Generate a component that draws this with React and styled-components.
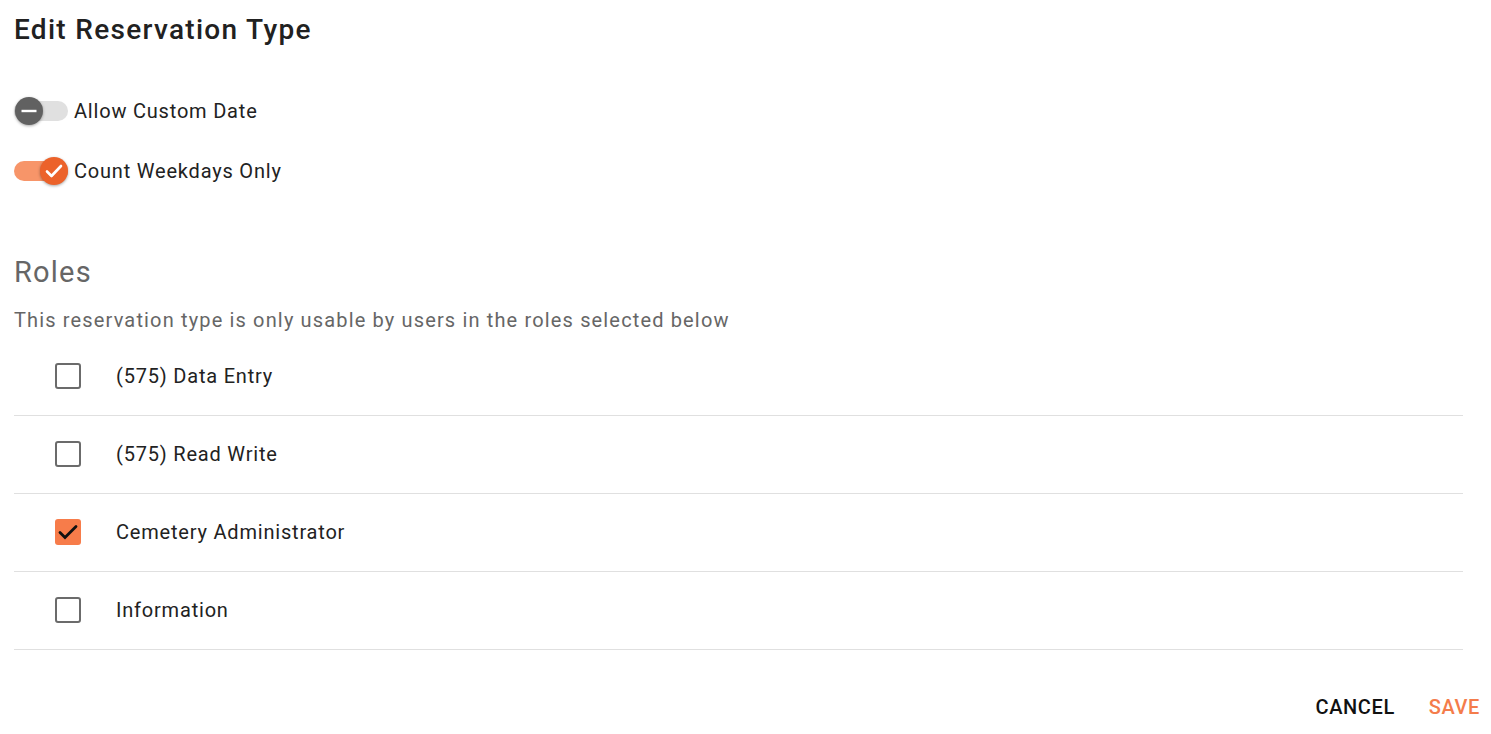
import React from 'react'
import styled, { createGlobalStyle } from 'styled-components'

const Global = createGlobalStyle`
body {
  margin: 0;
  background: #fff;
  font-family: Roboto, "Noto Sans", sans-serif;
  color: #222;
}
`

const Page = styled.div`
display: flex;
flex-direction: column;
padding: 12px 11px 0 14px;
`

const Title = styled.h1`
margin: 0;
font-size: 28px;
font-weight: 500;
line-height: 36px;
color: #212121;
letter-spacing: 1.3px;
`

const ToggleList = styled.div`
display: flex;
flex-direction: column;
gap: 22px;
margin-top: 44px;
`

const ToggleRow = styled.label`
display: flex;
align-items: center;
height: 38px;
font-size: 20px;
letter-spacing: 0.8px;
color: #222;
`

const Track = styled.span`
position: relative;
display: inline-block;
width: 54px;
height: 20px;
border-radius: 10px;
margin-right: 6px;
background: ${p => (p.$on ? '#f79569' : '#e0e0e0')};
`

const Thumb = styled.span`
position: absolute;
top: -4px;
left: ${p => (p.$on ? '26px' : '1px')};
width: 28px;
height: 28px;
border-radius: 50%;
background: ${p => (p.$on ? '#ec622a' : '#616161')};
box-shadow: 0 1px 3px rgba(0,0,0,0.35);
display: flex;
align-items: center;
justify-content: center;
`

const RolesHeader = styled.h2`
margin: 64px 0 0;
font-size: 29px;
font-weight: 400;
line-height: 36px;
color: #666;
letter-spacing: 1.2px;
`

const Subtitle = styled.p`
margin: 16px 0 0;
font-size: 20px;
line-height: 28px;
color: #666;
letter-spacing: 1.15px;
`

const RoleList = styled.div`
display: flex;
flex-direction: column;
width: 1449px;
margin-top: 4px;
`

const RoleRow = styled.div`
display: flex;
align-items: center;
height: 78px;
border-bottom: 1px solid #e0e0e0;
padding-left: 41px;
padding-bottom: 1px;
box-sizing: border-box;
font-size: 20px;
letter-spacing: 0.8px;
color: #222;
`

const Box = styled.span`
box-sizing: border-box;
width: 26px;
height: 26px;
border-radius: 3px;
border: ${p => (p.$checked ? 'none' : '2.5px solid #6b6b6b')};
background: ${p => (p.$checked ? '#f77c4a' : 'transparent')};
display: flex;
align-items: center;
justify-content: center;
margin-right: 35px;
`

const Actions = styled.div`
display: flex;
justify-content: flex-end;
gap: 34px;
margin-top: 45px;
`

const ActionButton = styled.button`
border: none;
background: none;
padding: 0;
font-family: Roboto, sans-serif;
font-size: 20px;
font-weight: 500;
letter-spacing: 0.6px;
color: ${p => (p.$primary ? '#f47c4b' : '#111')};
cursor: pointer;
`

const roles = [
  { name: '(575) Data Entry', checked: false },
  { name: '(575) Read Write', checked: false },
  { name: 'Cemetery Administrator', checked: true },
  { name: 'Information', checked: false },
]

const App = () => {
  return (
    <Page>
      <Global />
      <Title>Edit Reservation Type</Title>
      <ToggleList>
        <ToggleRow>
          <Track>
            <Thumb>
              <svg width="18" height="18" viewBox="0 0 18 18">
                <path d="M1.5 9h15" stroke="#fff" strokeWidth="2.4" />
              </svg>
            </Thumb>
          </Track>
          Allow Custom Date
        </ToggleRow>
        <ToggleRow>
          <Track $on>
            <Thumb $on>
              <svg width="20" height="20" viewBox="0 0 20 20">
                <path d="M3 10.5l4.5 4.5L17 5" fill="none" stroke="#fff" strokeWidth="2.6" strokeLinecap="round" strokeLinejoin="round" />
              </svg>
            </Thumb>
          </Track>
          Count Weekdays Only
        </ToggleRow>
      </ToggleList>
      <RolesHeader>Roles</RolesHeader>
      <Subtitle>This reservation type is only usable by users in the roles selected below</Subtitle>
      <RoleList>
        {roles.map(r => (
          <RoleRow key={r.name}>
            <Box $checked={r.checked}>
              {r.checked && (
                <svg width="22" height="22" viewBox="0 0 22 22">
                  <path d="M3 11.5l5 5L19 5.5" fill="none" stroke="#111" strokeWidth="2.8" strokeLinecap="round" />
                </svg>
              )}
            </Box>
            {r.name}
          </RoleRow>
        ))}
      </RoleList>
      <Actions>
        <ActionButton>CANCEL</ActionButton>
        <ActionButton $primary>SAVE</ActionButton>
      </Actions>
    </Page>
  )
}

export default App
